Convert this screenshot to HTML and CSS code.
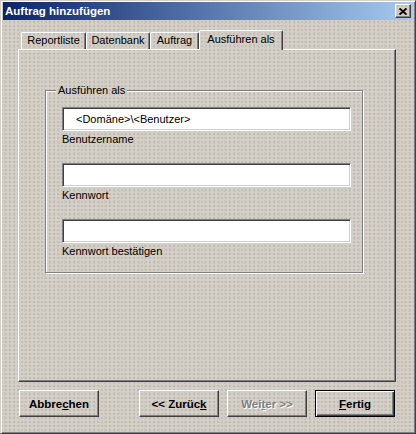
FILE: index.html
```html
<!DOCTYPE html>
<html lang="de">
<head>
<meta charset="utf-8">
<title>Auftrag hinzufügen</title>
<link rel="stylesheet" href="styles.css">
</head>
<body>
<div class="window">
  <div class="titlebar">
    <span class="title">Auftrag hinzufügen</span>
    <button class="close" type="button" aria-label="Schließen">
      <svg width="8" height="7" viewBox="0 0 8 7"><path d="M0.5 0.5 L7.5 6.5 M7.5 0.5 L0.5 6.5" stroke="#000" stroke-width="1.9" fill="none"/></svg>
    </button>
  </div>
  <div class="body">
    <div class="tabs">
      <div class="tab t1">Reportliste</div>
      <div class="tab t2">Datenbank</div>
      <div class="tab t3">Auftrag</div>
      <div class="tab active">Ausführen als</div>
    </div>
    <div class="panel">
      <div class="group">
        <span class="legend">Ausführen als</span>
        <div class="field">
          <div class="edit">&lt;Domäne&gt;\&lt;Benutzer&gt;</div>
          <div class="label">Benutzername</div>
        </div>
        <div class="field">
          <div class="edit"></div>
          <div class="label">Kennwort</div>
        </div>
        <div class="field">
          <div class="edit"></div>
          <div class="label">Kennwort bestätigen</div>
        </div>
      </div>
    </div>
    <div class="buttons">
      <button class="btn cancel" type="button">Abbre<u>c</u>hen</button>
      <button class="btn back" type="button">&lt;&lt; Zurüc<u>k</u></button>
      <button class="btn next" type="button" disabled>Wei<u>t</u>er &gt;&gt;</button>
      <button class="btn finish" type="button"><u>F</u>ertig</button>
    </div>
  </div>
</div>
</body>
</html>
```
FILE: styles.css
```css
* { box-sizing: border-box; }
html, body { margin: 0; padding: 0; }
body {
  font-family: "Liberation Sans", Arial, sans-serif;
  font-size: 11px;
  color: #000;
  background: #d4d0c8;
}
.window, .tab.active, .btn, .close, .legend {
  background-color: #d4d0c8;
  background-image:
    radial-gradient(rgba(130,125,115,.3) 0.6px, transparent 0.9px),
    radial-gradient(rgba(130,125,115,.22) 0.6px, transparent 0.9px);
  background-size: 4px 4px, 5px 3px;
  background-position: 0 0, 2px 1px;
  background-attachment: fixed;
}
.window {
  width: 416px;
  height: 434px;
  border: 1px solid;
  border-color: #d4d0c8 #404040 #404040 #d4d0c8;
  box-shadow: inset 1px 1px #fff, inset -1px -1px #808080;
  padding: 1px 2px 2px 2px;
  display: flex;
  flex-direction: column;
}
.titlebar {
  height: 18px;
  display: flex;
  align-items: center;
  justify-content: space-between;
  background: linear-gradient(to right, #0a246a, #a6caf0);
  padding: 0 2px 0 2px;
}
.title {
  color: #fff;
  font-weight: bold;
  font-size: 11.5px;
  line-height: 14px;
}
.close {
  width: 16px;
  height: 14px;
  padding: 0;
  border: 1px solid;
  border-color: #fff #404040 #404040 #fff;
  box-shadow: inset -1px -1px #808080;
  display: flex;
  align-items: center;
  justify-content: center;
}
.close svg { display: block; }
.body {
  flex: 1;
  display: flex;
  flex-direction: column;
  padding: 10px 0 0 15px;
}
.tabs {
  display: flex;
  align-items: flex-end;
  height: 19px;
  padding-left: 3px;
  position: relative;
  z-index: 1;
}
.tab {
  height: 17px;
  border: 1px solid;
  border-bottom: 0;
  border-color: #fff #404040 transparent #fff;
  box-shadow: inset -1px 0 #808080;
  border-radius: 2px 2px 0 0;
  text-align: center;
  line-height: 15px;
  white-space: nowrap;
}
.t1 { width: 65px; }
.t2 { width: 64px; }
.t3 { width: 49px; }
.tab.active {
  width: 84px;
  height: 20px;
  margin-bottom: -1px;
  line-height: 16px;
}
.panel {
  width: 378px;
  height: 333px;
  border: 1px solid;
  border-color: #fff #404040 #404040 #fff;
  box-shadow: inset -1px -1px #808080;
  padding: 40px 0 0 26px;
}
.group {
  width: 318px;
  height: 183px;
  border: 1px solid #808080;
  box-shadow: inset 1px 1px #fff, 1px 1px #fff;
  display: flex;
  flex-direction: column;
  align-items: flex-start;
}
.legend {
  margin: -7px 0 0 10px;
  padding: 0 2px;
  line-height: 13px;
}
.field {
  margin-left: 16px;
  margin-bottom: 17px;
}
.legend + .field { margin-top: 10px; }
.edit {
  width: 289px;
  height: 24px;
  background: #fff;
  border: 1px solid;
  border-color: #808080 #fff #fff #808080;
  box-shadow: inset 1px 1px #404040, inset -1px -1px #d4d0c8;
  padding-left: 13px;
  line-height: 22px;
  white-space: nowrap;
}
.label {
  margin-top: 2px;
  line-height: 13px;
}
.buttons {
  display: flex;
  margin-top: 8px;
}
.btn {
  width: 80px;
  height: 27px;
  padding: 0;
  font-family: "Liberation Sans", Arial, sans-serif;
  font-size: 11.5px;
  font-weight: bold;
  color: #000;
  border: 1px solid;
  border-color: #fff #404040 #404040 #fff;
  box-shadow: inset -1px -1px #808080;
  text-align: center;
}
.cancel { margin-left: 1px; }
.back { margin-left: 40px; }
.next { margin-left: 8px; color: #808080; text-shadow: 1px 1px 0 #fff; }
.finish {
  margin-left: 8px;
  border: 1px solid #000;
  box-shadow: inset 1px 1px #fff, inset -1px -1px #404040, inset -2px -2px #808080;
}
```
